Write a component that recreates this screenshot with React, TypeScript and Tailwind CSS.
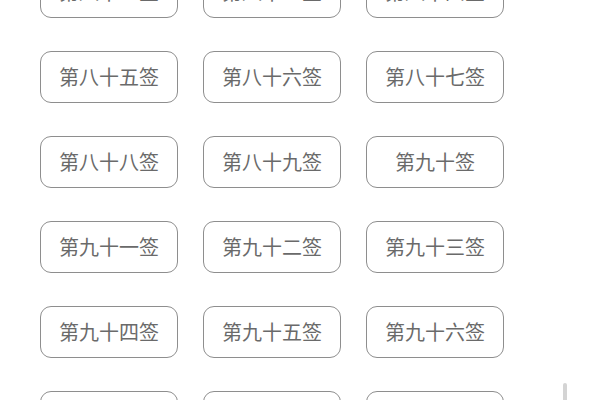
import React from "react";

const labels = [
  "第八十二签", "第八十三签", "第八十四签",
  "第八十五签", "第八十六签", "第八十七签",
  "第八十八签", "第八十九签", "第九十签",
  "第九十一签", "第九十二签", "第九十三签",
  "第九十四签", "第九十五签", "第九十六签",
  "第九十七签", "第九十八签", "第九十九签",
];

export default function App() {
  return (
    <div className="relative w-[600px] h-[400px] overflow-hidden bg-white">
      <div className="mt-[-34px] pl-[40px] grid grid-cols-[138px_138px_138px] gap-x-[25px] gap-y-[33px]">
        {labels.map((t) => (
          <div
            key={t}
            className="h-[52px] flex items-center justify-center rounded-[11px] border-[1.5px] border-[#8e8e8e] text-[20px] text-[#6a6a6a]"
            style={{ fontFamily: '"Noto Sans CJK SC", "Noto Sans", sans-serif' }}
          >
            {t}
          </div>
        ))}
      </div>
      {/* scrollbar thumb */}
      <div className="absolute left-[563px] top-[383px] w-[4px] h-[20px] rounded-full bg-[#d4d4d4]" />
    </div>
  );
}
